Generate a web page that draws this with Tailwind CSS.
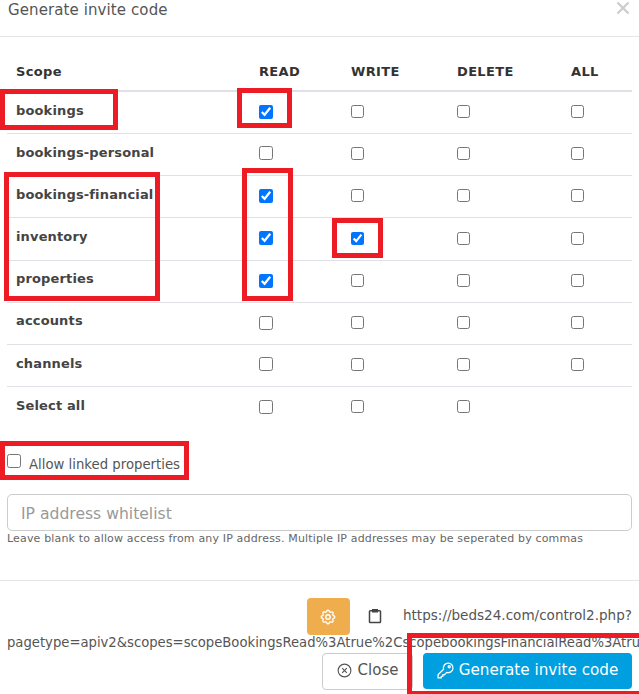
<!DOCTYPE html>
<html><head><meta charset="utf-8"><script src="https://cdn.jsdelivr.net/npm/@tailwindcss/browser@4"></script></head>
<body class="bg-white overflow-hidden font-['DejaVu_Sans',sans-serif] text-[#555]">
<div class="relative h-[694px] w-[639px] overflow-hidden">
  <header class="h-[37px] border-b border-[#e5e5e5] pl-[8px] pt-[1px] flex justify-between pr-[9px]">
    <h2 class="text-[15px] leading-[18px] tracking-[0.1px]">Generate invite code</h2>
    <svg class="w-[14px] h-[14px]" viewBox="0 0 14 14" fill="none" stroke="#ccc" stroke-width="2.2"><path d="M1.5 1.5 12.500 12.500M12.500 1.500 1.500 12.500"/></svg>
  </header>
  <div class="px-[7px] pt-[17px]">
    <table class="w-[625px] table-fixed border-collapse text-[13px] font-bold text-[#444] tracking-[0.15px]">
      <colgroup><col class="w-[243px]"><col class="w-[92px]"><col class="w-[106px]"><col class="w-[114px]"><col class="w-[70px]"></colgroup>
      <thead><tr class="h-[37px] border-b-2 border-[#dee2e6] text-left text-[#333] tracking-[0.35px]">
        <th class="pl-[9px]">Scope</th><th class="pl-[9px]">READ</th><th class="pl-[9px]">WRITE</th><th class="pl-[9px]">DELETE</th><th class="pl-[9px]">ALL</th>
      </tr></thead>
      <tbody>
        <tr class="h-[42px] border-b border-[#dee2e6]"><td class="pl-[9px] pb-[4px]">bookings</td><td class="pl-[9px] pb-[1px]"><input type="checkbox" checked class="block w-[14px] h-[14px]"></td><td class="pl-[9px] pb-[1px]"><input type="checkbox" class="block w-[13px] h-[13px]"></td><td class="pl-[9px] pb-[1px]"><input type="checkbox" class="block w-[13px] h-[13px]"></td><td class="pl-[9px] pb-[1px]"><input type="checkbox" class="block w-[13px] h-[13px]"></td></tr>
        <tr class="h-[42px] border-b border-[#dee2e6]"><td class="pl-[9px] pb-[3px]">bookings-personal</td><td class="pl-[9px] pb-[2px]"><input type="checkbox" class="block w-[14px] h-[14px]"></td><td class="pl-[9px] pb-[2px]"><input type="checkbox" class="block w-[13px] h-[13px]"></td><td class="pl-[9px] pb-[2px]"><input type="checkbox" class="block w-[13px] h-[13px]"></td><td class="pl-[9px] pb-[2px]"><input type="checkbox" class="block w-[13px] h-[13px]"></td></tr>
        <tr class="h-[42px] border-b border-[#dee2e6]"><td class="pl-[9px] pb-[3px]">bookings-financial</td><td class="pl-[9px] pb-[1px]"><input type="checkbox" checked class="block w-[14px] h-[14px]"></td><td class="pl-[9px] pb-[1px]"><input type="checkbox" class="block w-[13px] h-[13px]"></td><td class="pl-[9px] pb-[1px]"><input type="checkbox" class="block w-[13px] h-[13px]"></td><td class="pl-[9px] pb-[1px]"><input type="checkbox" class="block w-[13px] h-[13px]"></td></tr>
        <tr class="h-[43px] border-b border-[#dee2e6]"><td class="pl-[9px] pb-[4px]">inventory</td><td class="pl-[9px] pb-[1px]"><input type="checkbox" checked class="block w-[14px] h-[14px]"></td><td class="pl-[9px] pb-[1px]"><input type="checkbox" checked class="block w-[13px] h-[13px]"></td><td class="pl-[9px] pb-[1px]"><input type="checkbox" class="block w-[13px] h-[13px]"></td><td class="pl-[9px] pb-[1px]"><input type="checkbox" class="block w-[13px] h-[13px]"></td></tr>
        <tr class="h-[42px] border-b border-[#dee2e6]"><td class="pl-[9px] pb-[4px]">properties</td><td class="pl-[9px] pb-[1px]"><input type="checkbox" checked class="block w-[14px] h-[14px]"></td><td class="pl-[9px] pb-[1px]"><input type="checkbox" class="block w-[13px] h-[13px]"></td><td class="pl-[9px] pb-[1px]"><input type="checkbox" class="block w-[13px] h-[13px]"></td><td class="pl-[9px] pb-[1px]"><input type="checkbox" class="block w-[13px] h-[13px]"></td></tr>
        <tr class="h-[42px] border-b border-[#dee2e6]"><td class="pl-[9px] pb-[4px]">accounts</td><td class="pl-[9px] pb-[1px]"><input type="checkbox" class="block w-[14px] h-[14px]"></td><td class="pl-[9px] pb-[1px]"><input type="checkbox" class="block w-[13px] h-[13px]"></td><td class="pl-[9px] pb-[1px]"><input type="checkbox" class="block w-[13px] h-[13px]"></td><td class="pl-[9px] pb-[1px]"><input type="checkbox" class="block w-[13px] h-[13px]"></td></tr>
        <tr class="h-[42px] border-b border-[#dee2e6]"><td class="pl-[9px] pb-[3px]">channels</td><td class="pl-[9px] pb-[2px]"><input type="checkbox" class="block w-[14px] h-[14px]"></td><td class="pl-[9px] pb-[2px]"><input type="checkbox" class="block w-[13px] h-[13px]"></td><td class="pl-[9px] pb-[2px]"><input type="checkbox" class="block w-[13px] h-[13px]"></td><td class="pl-[9px] pb-[2px]"><input type="checkbox" class="block w-[13px] h-[13px]"></td></tr>
        <tr class="h-[42px]"><td class="pl-[9px] pb-[4px]">Select all</td><td class="pl-[9px] pb-[1px]"><input type="checkbox" class="block w-[14px] h-[14px]"></td><td class="pl-[9px] pb-[1px]"><input type="checkbox" class="block w-[13px] h-[13px]"></td><td class="pl-[9px] pb-[1px]"><input type="checkbox" class="block w-[13px] h-[13px]"></td><td></td></tr>
      </tbody>
    </table>
    <label class="mt-[26px] flex items-start text-[13.25px] leading-[16px] h-[21px]"><input type="checkbox" class="w-[14px] h-[14px] mr-[8px]"><span class="mt-[3px]">Allow linked properties</span></label>
    <div class="mt-[19px] w-[625px] h-[37px] border border-[#ccc] rounded-[5px] pl-[13px] pt-[4px] flex items-center text-[15.6px] text-[#999]">IP address whitelist</div>
    <p class="text-[11px] leading-[16px] tracking-[0.16px] text-[#666]">Leave blank to allow access from any IP address. Multiple IP addresses may be seperated by commas</p>
  </div>
  <footer class="mt-[33px] border-t border-[#e5e5e5] pt-[17px]">
    <div class="flex justify-end items-start pr-[7px] h-[35px]">
      <span class="w-[43px] h-[37px] bg-[#f0ad4e] rounded-[4px] flex items-center justify-center"><svg class="w-[18px] h-[18px]" viewBox="0 0 24 24" fill="none" stroke="#fff" stroke-width="1.8" stroke-linecap="round" stroke-linejoin="round"><path d="M10.3 4.3c.4-1.8 3-1.800 3.400 0a1.700 1.700 0 0 0 2.600 1.100c1.500-.9 3.300.8 2.300 2.400a1.700 1.700 0 0 0 1.100 2.500c1.800.4 1.800 3 0 3.400a1.700 1.700 0 0 0-1.100 2.600c.9 1.500-.8 3.300-2.400 2.300a1.700 1.700 0 0 0-2.500 1.100c-.4 1.800-3 1.800-3.400 0a1.700 1.700 0 0 0-2.600-1.100c-1.500.9-3.300-.8-2.300-2.400a1.700 1.700 0 0 0-1.100-2.500c-1.800-.4-1.800-3 0-3.400a1.700 1.700 0 0 0 1.100-2.600c-.9-1.500.8-3.300 2.400-2.300 1 .6 2.300.1 2.500-1.100z"/><circle cx="12" cy="12" r="3"/></svg></span>
      <svg class="w-[16px] h-[16px] ml-[17px] mt-[10px]" viewBox="0 0 16 16" fill="none" stroke="#444" stroke-width="1.500"><path d="M5 2.800H3.300a.8.8 0 0 0-.8.8v10.100c0 .5.4.8.8.8h9.400c.4 0 .8-.3.8-.8V3.600a.8.8 0 0 0-.8-.8H11"/><rect x="5" y="1" width="6" height="3.500" fill="#444" stroke="none"/></svg>
      <span class="text-[13.56px] leading-[20px] ml-[20px] mt-[7px]">https://beds24.com/control2.php?</span>
    </div>
    <div class="pl-[7px] text-[13.2px] leading-[20px] whitespace-nowrap overflow-hidden h-[20px]">pagetype=apiv2&amp;scopes=scopeBookingsRead%3Atrue%2CscopebookingsFinancialRead%3Atrue</div>
    <div class="flex justify-end gap-[10px] pr-[7px]">
      <span class="w-[91px] h-[37px] pb-[2px] border border-[#ccc] rounded-[4px] flex items-center justify-center text-[15px]"><svg class="w-[15px] h-[15px] mr-[6px]" viewBox="0 0 16 16" fill="none" stroke="#555" stroke-width="1.200"><circle cx="8" cy="8" r="6.800"/><path d="M5.500 5.500 10.500 10.500M10.500 5.500 5.500 10.500"/></svg>Close</span>
      <span class="w-[209px] h-[36px] pb-[2px] bg-[#009fdf] rounded-[4px] text-white flex items-center justify-center text-[15.2px]"><svg class="w-[17px] h-[17px] mr-[5px]" viewBox="0 0 16 16" fill="none" stroke="#fff" stroke-width="1.200" stroke-linejoin="round"><path d="M10.500 1a4.500 4.500 0 0 0-4.300 5.800L1 12v3h3v-1.500h1.500V12H7l2.200-2.200A4.500 4.500 0 1 0 10.500 1z"/><circle cx="11.500" cy="4.500" r="1"/></svg>Generate invite code</span>
    </div>
  </footer>
  <div class="absolute left-0 top-[89px] w-[118px] h-[41px] border-[5px] border-[#ed1c24]"></div>
  <div class="absolute left-[237px] top-[88px] w-[55px] h-[40px] border-[5px] border-[#ed1c24]"></div>
  <div class="absolute left-[4px] top-[172px] w-[156px] h-[129px] border-[5px] border-[#ed1c24]"></div>
  <div class="absolute left-[242px] top-[168px] w-[51px] h-[133px] border-[5px] border-[#ed1c24]"></div>
  <div class="absolute left-[332px] top-[218px] w-[51px] h-[40px] border-[5px] border-[#ed1c24]"></div>
  <div class="absolute left-0 top-[441px] w-[189px] h-[39px] border-[5px] border-[#ed1c24]"></div>
  <div class="absolute left-[407px] top-[633px] w-[232px] h-[61px] border-[5px] border-b-[3px] border-r-0 border-[#ed1c24]"></div>
</div>
</body></html>
